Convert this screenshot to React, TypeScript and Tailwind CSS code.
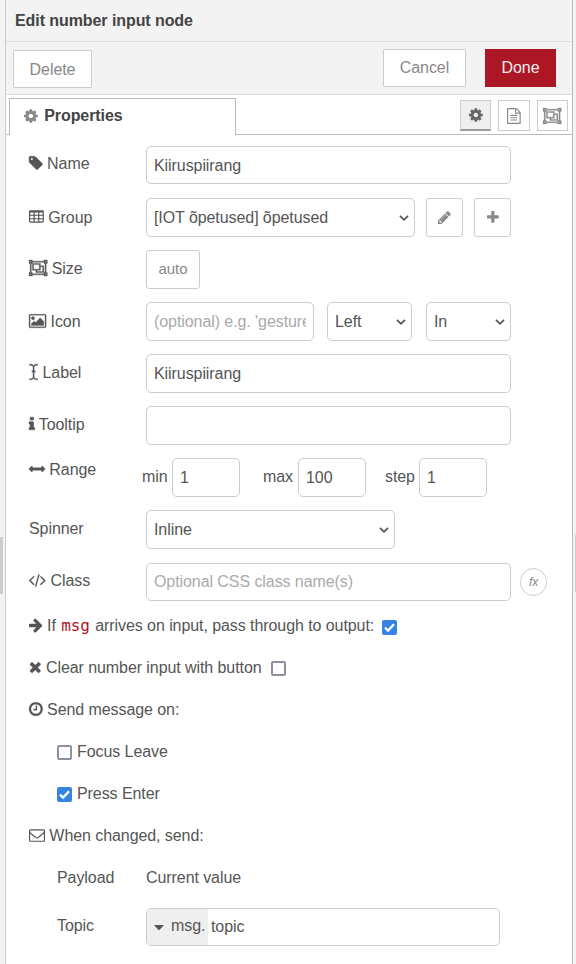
import type { ReactNode } from "react";

type Glyph = { x: number; w: number; d: string; bold?: number };

// Font glyph outlines: x is the left bearing of the view box, w the advance, on a 1792-unit em.
const glyphs: Record<string, Glyph> = {
  cog: {
    x: 128,
    w: 1536,
    d: "M1152 896q0-106-75-181t-181-75-181 75-75 181 75 181 181 75 181-75 75-181zm512-109v222q0 12-8 23t-20 13l-185 28q-19 54-39 91 35 50 107 138 10 12 10 25t-9 23q-27 37-99 108t-94 71q-12 0-26-9l-138-108q-44 23-91 38-16 136-29 186-7 28-36 28h-222q-14 0-24.5-8.5t-11.5-21.5l-28-184q-49-16-90-37l-141 107q-10 9-25 9-14 0-25-11-126-114-165-168-7-10-7-23 0-12 8-23 15-21 51-66.5t54-70.5q-27-50-41-99l-183-27q-13-2-21-12.5t-8-23.5v-222q0-12 8-23t19-13l186-28q14-46 39-92-40-57-107-138-10-12-10-24 0-10 9-23 26-36 98.5-107.5t94.5-71.5q13 0 26 10l138 107q44-23 91-38 16-136 29-186 7-28 36-28h222q14 0 24.5 8.5t11.5 21.5l28 184q49 16 90 37l142-107q9-9 24-9 13 0 25 10 129 119 165 170 7 8 7 22 0 12-8 23-15 21-51 66.5t-54 70.5q26 50 41 98l183 28q13 2 21 12.5t8 23.5z",
  },
  tag: {
    x: 128,
    w: 1536,
    bold: 40,
    d: "M576 448q0-53-37.5-90.5t-90.5-37.5-90.5 37.5-37.5 90.5 37.5 90.5 90.5 37.5 90.5-37.5 37.5-90.5zm1067 576q0 53-37 90l-491 492q-39 37-91 37-53 0-90-37l-715-716q-38-37-64.5-101t-26.5-117v-416q0-52 38-90t90-38h416q53 0 117 26.5t102 64.5l715 714q37 39 37 91z",
  },
  table: {
    x: 0,
    w: 1664,
    d: "M160 128h1344q66 0 113 47t47 113v1088q0 66-47 113t-113 47h-1344q-66 0-113-47t-47-113v-1088q0-66 47-113t113-47zM128 416v192q0 32 32 32h320q32 0 32-32v-192q0-32-32-32h-320q-32 0-32 32zM640 416v192q0 32 32 32h320q32 0 32-32v-192q0-32-32-32h-320q-32 0-32 32zM1152 416v192q0 32 32 32h320q32 0 32-32v-192q0-32-32-32h-320q-32 0-32 32zM128 800v192q0 32 32 32h320q32 0 32-32v-192q0-32-32-32h-320q-32 0-32 32zM640 800v192q0 32 32 32h320q32 0 32-32v-192q0-32-32-32h-320q-32 0-32 32zM1152 800v192q0 32 32 32h320q32 0 32-32v-192q0-32-32-32h-320q-32 0-32 32zM128 1184v192q0 32 32 32h320q32 0 32-32v-192q0-32-32-32h-320q-32 0-32 32zM640 1184v192q0 32 32 32h320q32 0 32-32v-192q0-32-32-32h-320q-32 0-32 32zM1152 1184v192q0 32 32 32h320q32 0 32-32v-192q0-32-32-32h-320q-32 0-32 32z",
  },
  group: {
    x: 0,
    w: 2048,
    bold: 40,
    d: "M2048 384h-128v1024h128v384h-384v-128h-1280v128h-384v-384h128v-1024h-128v-384h384v128h1280v-128h384zM1792 128v128h128v-128zM128 128v128h128v-128zM256 1664v-128h-128v128zM1664 1536v-128h128v-1024h-128v-128h-1280v128h-128v1024h128v128zM1920 1664v-128h-128v128zM1280 640h384v768h-896v-256h-384v-768h896zM512 1024h640v-512h-640zM1536 1280v-512h-256v384h-384v128z",
  },
  pencil: {
    x: 128,
    w: 1536,
    d: "M491 1536l91-91-235-235-91 91v107h128v128h107zm523-928q0-22-22-22-10 0-17 7l-542 542q-7 7-7 17 0 22 22 22 10 0 17-7l542-542q7-7 7-17zm-54-192l416 416-832 832h-416v-416zm683 96q0 53-37 90l-166 166-416-416 166-165q36-38 90-38 53 0 91 38l235 234q37 39 37 91z",
  },
  plus: {
    x: 192,
    w: 1408,
    d: "M1600 736v192q0 40-28 68t-68 28h-416v416q0 40-28 68t-68 28h-192q-40 0-68-28t-28-68v-416h-416q-40 0-68-28t-28-68v-192q0-40 28-68t68-28h416v-416q0-40 28-68t68-28h192q40 0 68 28t28 68v416h416q40 0 68 28t28 68z",
  },
  picture: {
    x: 0,
    w: 1920,
    bold: 30,
    d: "M640 576q0 80-56 136t-136 56-136-56-56-136 56-136 136-56 136 56 56 136zm1024 384v448h-1408v-192l320-320 160 160 512-512zm96-704h-1600q-13 0-22.5 9.5t-9.5 22.5v1216q0 13 9.5 22.5t22.5 9.5h1600q13 0 22.5-9.5t9.5-22.5v-1216q0-13-9.5-22.5t-22.5-9.5zm160 32v1216q0 66-47 113t-113 47h-1600q-66 0-113-47t-47-113v-1216q0-66 47-113t113-47h1600q66 0 113 47t47 113z",
  },
  cursor: {
    x: 64,
    w: 1024,
    bold: 40,
    d: "M1024 128q-384 0-384 224v416h128v128h-128v544q0 224 384 224v128q-336 0-448-156-112 156-448 156v-128q384 0 384-224v-544h-128v-128h128v-416q0-224-384-224v-128q336 0 448 156 112-156 448-156z",
  },
  info: {
    x: 576,
    w: 640,
    bold: 70,
    d: "M1216 1344v128q0 26-19 45t-45 19h-512q-26 0-45-19t-19-45v-128q0-26 19-45t45-19h64v-384h-64q-26 0-45-19t-19-45v-128q0-26 19-45t45-19h384q26 0 45 19t19 45v576h64q26 0 45 19t19 45zm-128-1152v192q0 26-19 45t-45 19h-256q-26 0-45-19t-19-45v-192q0-26 19-45t45-19h256q26 0 45 19t19 45z",
  },
  arrowsH: {
    x: 0,
    w: 1792,
    bold: 50,
    d: "M1792 896q0 26-19 45l-256 256q-19 19-45 19t-45-19-19-45v-128h-1024v128q0 26-19 45t-45 19-45-19l-256-256q-19-19-19-45t19-45l256-256q19-19 45-19t45 19 19 45v128h1024v-128q0-26 19-45t45-19 45 19l256 256q19 19 19 45z",
  },
  code: {
    x: 32,
    w: 1920,
    bold: 30,
    d: "M617 1399l-50 50q-10 10-23 10t-23-10l-466-466q-10-10-10-23t10-23l466-466q10-10 23-10t23 10l50 50q10 10 10 23t-10 23l-393 393 393 393q10 10 10 23t-10 23zm591-1067l-373 1291q-4 13-15.5 19.5t-23.5 2.5l-62-17q-13-4-19.5-15.5t-2.5-24.5l373-1291q4-13 15.5-19.5t23.5-2.5l62 17q13 4 19.5 15.5t2.5 24.5zm657 651l-466 466q-10 10-23 10t-23-10l-50-50q-10-10-10-23t10-23l393-393-393-393q-10-10-10-23t10-23l50-50q10-10 23-10t23 10l466 466q10 10 10 23t-10 23z",
  },
  arrowRight: {
    x: 128,
    w: 1536,
    d: "M1600 960q0 54-37 91l-651 651q-39 37-91 37-51 0-90-37l-75-75q-38-38-38-91t38-91l293-293h-704q-52 0-84.5-37.5t-32.5-90.5v-128q0-53 32.5-90.5t84.5-37.5h704l-293-294q-38-36-38-90t38-90l75-75q38-38 90-38 53 0 91 38l651 651q37 35 37 90z",
  },
  times: {
    x: 192,
    w: 1408,
    bold: 40,
    d: "M1490 1322q0 40-28 68l-136 136q-28 28-68 28t-68-28l-294-294-294 294q-28 28-68 28t-68-28l-136-136q-28-28-28-68t28-68l294-294-294-294q-28-28-28-68t28-68l136-136q28-28 68-28t68 28l294 294 294-294q28-28 68-28t68 28l136 136q28 28 28 68t-28 68l-294 294 294 294q28 28 28 68z",
  },
  clock: {
    x: 128,
    w: 1536,
    bold: 30,
    d: "M1024 544v448q0 14-9 23t-23 9h-320q-14 0-23-9t-9-23v-64q0-14 9-23t23-9h224v-352q0-14 9-23t23-9h64q14 0 23 9t9 23zm416 352q0-148-73-273t-198-198-273-73-273 73-198 198-73 273 73 273 198 198 273 73 273-73 198-198 73-273zm224 0q0 209-103 385.5t-279.5 279.5-385.5 103-385.5-103-279.5-279.5-103-385.5 103-385.5 279.5-279.5 385.5-103 385.5 103 279.5 279.5 103 385.5z",
  },
  envelope: {
    x: 0,
    w: 1792,
    d: "M1664 1504v-768q-32 36-69 66-268 206-426 338-51 43-83 67t-86.5 48.5-102.5 24.5h-2q-48 0-102.5-24.5t-86.5-48.5-83-67q-158-132-426-338-37-30-69-66v768q0 13 9.5 22.5t22.5 9.5h1472q13 0 22.5-9.5t9.5-22.5zm0-1051v-24.5l-.5-13-3-12.5-5.5-9-9-7.5-14-2.5h-1472q-13 0-22.5 9.5t-9.5 22.5q0 168 147 284 193 152 401 317 6 5 35 29.5t46 37.5 44.5 31.5 50.5 27.5 43 9h2q20 0 43-9t50.5-27.5 44.5-31.5 46-37.5 35-29.5q208-165 401-317 54-43 100.5-115.5t46.5-131.5zm128-37v1088q0 66-47 113t-113 47h-1472q-66 0-113-47t-47-113v-1088q0-66 47-113t113-47h1472q66 0 113 47t47 113z",
  },
  fileText: {
    x: 0,
    w: 1536,
    d: "M1468 380q28 28 48 76t20 88v1152q0 40-28 68t-68 28h-1344q-40 0-68-28t-28-68v-1600q0-40 28-68t68-28h896q40 0 88 20t76 48zm-444-244v376h376q-10-29-22-41l-313-313q-12-12-41-22zm384 1528v-1024h-416q-40 0-68-28t-28-68v-416h-768v1536h1280zm-1024-864q0-14 9-23t23-9h704q14 0 23 9t9 23v64q0 14-9 23t-23 9h-704q-14 0-23-9t-9-23v-64zm736 224q14 0 23 9t9 23v64q0 14-9 23t-23 9h-704q-14 0-23-9t-9-23v-64q0-14 9-23t23-9h704zm0 256q14 0 23 9t9 23v64q0 14-9 23t-23 9h-704q-14 0-23-9t-9-23v-64q0-14 9-23t23-9h704z",
  },
};

function Icon({ name, size = 16, className = "" }: { name: string; size?: number; className?: string }) {
  const g = glyphs[name];
  return (
    <svg
      className={`inline-block shrink-0 overflow-visible align-[-2.3px] ${className}`}
      width={(g.w / 1792) * size}
      height={size}
      viewBox={`${g.x} 0 ${g.w} 1792`}
      fill="currentColor"
      fillRule="evenodd"
      stroke="currentColor"
      strokeWidth={g.bold ?? 0}
    >
      <path d={g.d} />
    </svg>
  );
}

function Chevron() {
  return (
    <svg className="shrink-0" width="10" height="8" viewBox="0 0 10 8" fill="none" stroke="currentColor" strokeWidth="1.8">
      <path d="M1 1.8 5 5.8 9 1.8" />
    </svg>
  );
}

function Box({ className, children }: { className: string; children?: ReactNode }) {
  return (
    <div className={`flex items-center rounded-[5px] border border-[#ccc] bg-white px-[7px] leading-5 ${className}`}>
      <span className="min-w-0 flex-1 overflow-hidden whitespace-nowrap">{children}</span>
    </div>
  );
}

function Select({ className, children }: { className: string; children: ReactNode }) {
  return (
    <div className={`flex h-[39px] items-center justify-between rounded-[5px] border border-[#ccc] bg-white pr-[5px] pl-[7px] leading-5 ${className}`}>
      <span className="whitespace-nowrap">{children}</span>
      <Chevron />
    </div>
  );
}

function SmallButton({ className, children }: { className: string; children: ReactNode }) {
  return (
    <div className={`flex items-center justify-center rounded-[3px] border border-[#ccc] bg-white text-[#888] ${className}`}>
      {children}
    </div>
  );
}

function Row({ label, icon, pad, className = "h-[52px]", children }: { label: string; icon?: string; pad: string; className?: string; children: ReactNode }) {
  return (
    <div className={`flex items-start ${className}`}>
      <div className={`w-[117px] shrink-0 whitespace-nowrap ${pad}`}>
        {icon && (
          <>
            <Icon name={icon} />{" "}
          </>
        )}
        {label}
      </div>
      {children}
    </div>
  );
}

function Check({ on, className = "" }: { on?: boolean; className?: string }) {
  return on ? (
    <span className={`flex h-[15px] w-[15px] shrink-0 items-center justify-center rounded-[2px] bg-[#3584e4] ${className}`}>
      <svg width="11" height="11" viewBox="0 0 11 11" fill="none" stroke="#fff" strokeWidth="2.3">
        <path d="M1 5.6 4.1 8.6 10 2.2" />
      </svg>
    </span>
  ) : (
    <span className={`h-[15px] w-[15px] shrink-0 rounded-[2px] border-2 border-[#8f8f9d] bg-white ${className}`} />
  );
}

export default function App() {
  return (
    <div className="flex h-[964px] w-[576px] overflow-hidden bg-[#f3f3f3] font-['Liberation_Sans',Arial,sans-serif] text-base leading-5 tracking-[-0.075px] text-[#555]">
      <div className="flex w-[5px] shrink-0 items-start pt-[537px]">
        <div className="h-[57px] w-[3px] bg-[#ccc]" />
      </div>
      <div className="flex w-[568px] shrink-0 flex-col border-x border-l-[#ccc] border-r-[#bbb] bg-white">
        <div className="flex h-[42px] shrink-0 items-center border-b border-[#ddd] bg-[#f3f3f3] pl-[9px] font-bold text-[#444]">
          Edit number input node
        </div>
        <div className="flex h-[53px] shrink-0 items-start border-b border-[#ddd] bg-[#f3f3f3] pt-[7px] pl-[7px] text-[#888]">
          <div className="mt-px flex h-[38px] w-[79px] items-center justify-center rounded-[1px] border border-[#ccc] bg-white pt-[2px]">Delete</div>
          <div className="ml-[291px] flex h-[38px] w-[83px] items-center justify-center rounded-[1px] border border-[#ccc] bg-white">Cancel</div>
          <div className="ml-[19px] flex h-[38px] w-[71px] items-center justify-center bg-[#ad1625] text-[#eee]">Done</div>
        </div>
        <div className="flex h-10 shrink-0">
          <div className="w-[3px] border-b border-[#bbb]" />
          <div className="mt-[3px] flex w-[227px] items-center border-x border-t border-[#bbb] pb-[3px] pl-[14px] font-bold text-[#444]">
            <Icon name="cog" className="mr-[6.5px] text-[#888]" />
            Properties
          </div>
          <div className="flex flex-1 items-start border-b border-[#bbb] pt-[5px] pl-[224px] text-[#888]">
            <div className="flex h-[31px] w-[31px] items-center justify-center border border-b-2 border-[#ccc] border-b-[#999] bg-[#efefef] text-[#666]">
              <Icon name="cog" />
            </div>
            <div className="ml-[7px] flex h-[31px] w-8 items-center justify-center border border-[#ccc]">
              <Icon name="fileText" />
            </div>
            <div className="ml-[7px] flex h-[31px] w-[31px] items-center justify-center border border-[#ccc]">
              <Icon name="group" />
            </div>
          </div>
        </div>

        <div className="flex flex-col pt-[11px] pl-[23px]">
          <Row label="Name" icon="tag" pad="pt-2">
            <Box className="h-[38px] w-[365px] pt-[2px]">Kiiruspiirang</Box>
          </Row>
          <Row label="Group" icon="table" pad="pt-[10px]">
            <Select className="w-[269px]">[IOT õpetused] õpetused</Select>
            <SmallButton className="ml-[11px] h-[39px] w-[37px]">
              <Icon name="pencil" size={15} />
            </SmallButton>
            <SmallButton className="ml-[11px] h-[39px] w-[37px] pb-px">
              <Icon name="plus" size={15} />
            </SmallButton>
          </Row>
          <Row label="Size" icon="group" pad="pt-[9px]">
            <SmallButton className="h-[39px] w-[54px] pb-[2px] text-[15px]">auto</SmallButton>
          </Row>
          <Row label="Icon" icon="picture" pad="pt-[10px]">
            <Box className="h-[39px] w-[168px] text-[#aaa]">(optional) e.g. 'gesture'</Box>
            <Select className="ml-[13px] w-[85px]">Left</Select>
            <Select className="ml-[14px] w-[85px]">In</Select>
          </Row>
          <Row label="Label" icon="cursor" pad="pt-[9px]">
            <Box className="h-[39px] w-[365px]">Kiiruspiirang</Box>
          </Row>
          <Row label="Tooltip" icon="info" pad="pt-[9px]">
            <Box className="h-[39px] w-[365px]" />
          </Row>
          <div className="flex h-[52px] items-start">
            <div className="w-[113px] pt-[2px]">
              <Icon name="arrowsH" /> Range
            </div>
            <div className="w-[30px] pt-[9px]">min</div>
            <Box className="h-[39px] w-[68px]">1</Box>
            <div className="ml-[23px] w-[35px] pt-[9px]">max</div>
            <Box className="h-[39px] w-[68px]">100</Box>
            <div className="ml-[19px] w-[34px] pt-[9px]">step</div>
            <Box className="h-[39px] w-[68px]">1</Box>
          </div>
          <Row label="Spinner" pad="pt-[9px]" className="h-[53px]">
            <Select className="w-[249px]">Inline</Select>
          </Row>
          <Row label="Class" icon="code" pad="pt-2" className="h-[53px]">
            <Box className="h-[38px] w-[365px] text-[#aaa]">Optional CSS class name(s)</Box>
            <div className="mt-[5px] ml-[9px] flex h-7 w-[27px] items-center justify-center rounded-full border border-[#ccc] text-[12px] text-[#888] italic">
              fx
            </div>
          </Row>

          <div className="flex h-[42px] items-start whitespace-nowrap">
            <div>
              <Icon name="arrowRight" /> If{" "}
              <code className="px-px font-['DejaVu_Sans_Mono',monospace] text-base leading-none text-[#ad1625]">msg</code> arrives on input, pass through to output:
            </div>
            <Check on className="mt-1 ml-2" />
          </div>
          <div className="flex h-[42px] items-start whitespace-nowrap">
            <div>
              <Icon name="times" /> Clear number input with button
            </div>
            <Check className="mt-[3px] ml-[9px]" />
          </div>
          <div className="h-[42px]">
            <Icon name="clock" /> Send message on:
          </div>
          <div className="flex h-[42px] items-start pl-7">
            <Check className="mt-[3px] mr-[5px]" />
            Focus Leave
          </div>
          <div className="flex h-[42px] items-start pl-7">
            <Check on className="mt-[3px] mr-[5px]" />
            Press Enter
          </div>
          <div className="h-[42px]">
            <Icon name="envelope" /> When changed, send:
          </div>
          <div className="flex h-10 items-start pl-7">
            <div className="w-[89px]">Payload</div>
            <div>Current value</div>
          </div>
          <div className="flex items-start pl-7">
            <div className="w-[89px] pt-2">Topic</div>
            <div className="flex h-[38px] w-[354px] overflow-hidden rounded-[5px] border border-[#ccc]">
              <div className="flex w-[61px] items-center bg-[#efefef] pb-[2px] pl-[7px]">
                <svg className="mt-[3px] mr-[7px] shrink-0" width="10" height="5.5" viewBox="0 0 10 5.5" fill="currentColor">
                  <path d="M0 0h10L5 5.5z" />
                </svg>
                msg.
              </div>
              <div className="flex items-center pl-[3px]">topic</div>
            </div>
          </div>
        </div>
      </div>
      <div className="flex flex-1 items-start justify-end pt-[535px]">
        <div className="h-[57px] w-px bg-[#ccc]" />
      </div>
    </div>
  );
}
